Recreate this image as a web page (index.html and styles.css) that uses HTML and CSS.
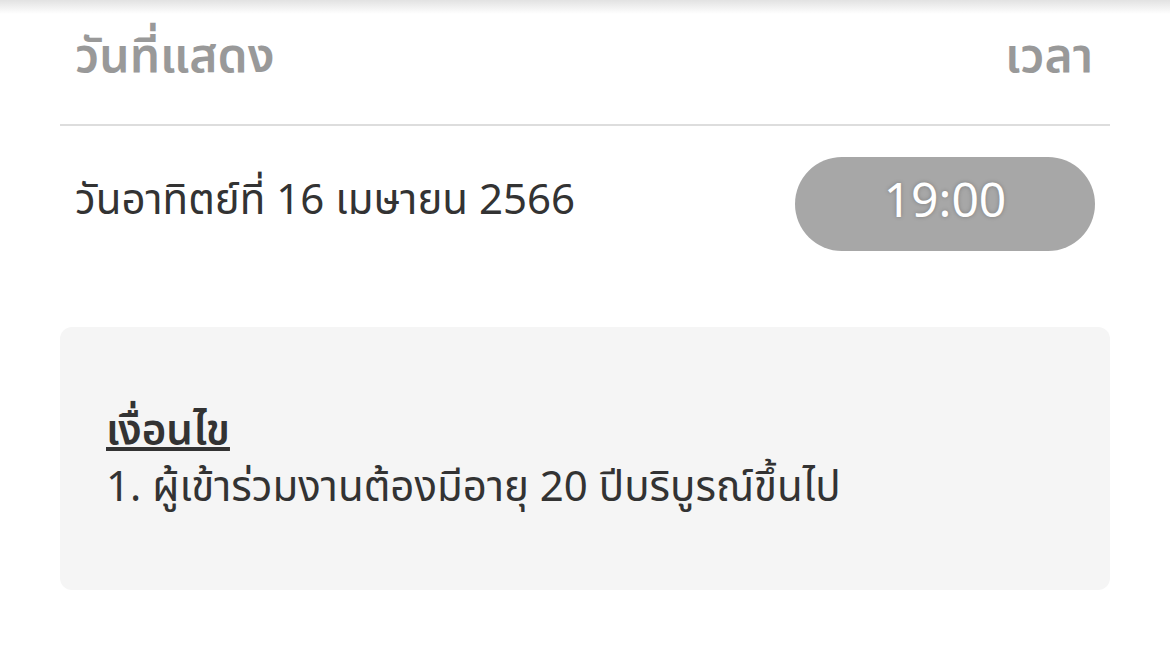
FILE: index.html
```html
<!DOCTYPE html>
<html lang="th">
<head>
  <meta charset="UTF-8" />
  <meta name="viewport" content="width=device-width, initial-scale=1.0"/>
  <title>รอบการแสดง</title>
  <link rel="stylesheet" href="styles.css">
</head>
<body>

  <div class="top-shade"></div>

  <div class="show-panel">
    <div class="head-row">
      <span class="head-label">วันที่แสดง</span>
      <span class="head-label">เวลา</span>
    </div>

    <div class="date-row">
      <span class="show-date">วันอาทิตย์ที่ 16 เมษายน 2566</span>
      <button class="time-pill">19:00</button>
    </div>

    <div class="terms-box">
      <h3 class="terms-title">เงื่อนไข</h3>
      <p class="terms-item">1. ผู้เข้าร่วมงานต้องมีอายุ 20 ปีบริบูรณ์ขึ้นไป</p>
    </div>
  </div>

</body>
</html>
```

FILE: styles.css
```css
* {
  box-sizing: border-box;
  font-family: "Noto Sans", "Noto Sans Thai", sans-serif;
}
body {
  background-color: #ffffff;
  color: #333333;
  margin: 0;
}
.top-shade {
  height: 14px;
  background: linear-gradient(#e2e2e2, #ffffff);
}
.show-panel {
  width: 1050px;
  margin-left: 60px;
}
.head-row {
  display: flex;
  justify-content: space-between;
  padding: 10px 17px 40px 15px;
  border-bottom: 2px solid #dddddd;
}
.head-label {
  font-size: 48px;
  font-weight: 600;
  color: #999999;
  line-height: 60px;
}
.date-row {
  display: flex;
  align-items: center;
  justify-content: space-between;
  padding: 31px 15px 0 15px;
}
.show-date {
  font-size: 42px;
  color: #333333;
  padding-bottom: 6px;
}
.time-pill {
  width: 300px;
  height: 94px;
  border: none;
  border-radius: 47px;
  background-color: #a7a7a7;
  color: #ffffff;
  font-size: 48px;
  padding: 0 0 12px 0;
  text-shadow: 0 0 4px rgba(0,0,0,0.25);
}
.terms-box {
  margin-top: 76px;
  height: 263px;
  background: #f5f5f5;
  border-radius: 12px;
  padding: 76px 46px 0 46px;
}
.terms-title {
  margin: 0;
  font-size: 42px;
  font-weight: 600;
  text-decoration: underline;
  color: #333333;
  line-height: 50px;
}
.terms-item {
  margin: 4px 0 0 0;
  font-size: 42px;
  line-height: 56px;
  color: #333333;
}
```
